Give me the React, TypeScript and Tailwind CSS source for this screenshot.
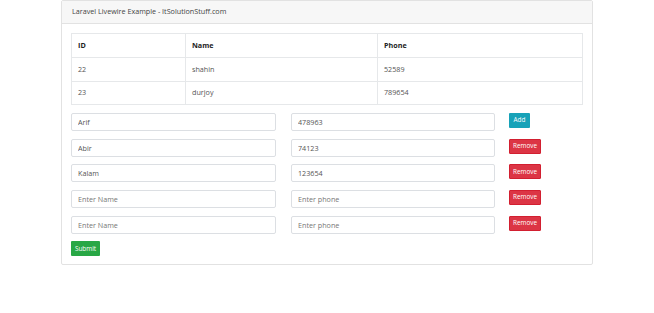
import React, { useState } from "react";

type Person = { id: number; name: string; phone: string };
type Entry = { name: string; phone: string };

const people: Person[] = [
  { id: 22, name: "shahin", phone: "52589" },
  { id: 23, name: "durjoy", phone: "789654" },
];

const initialEntries: Entry[] = [
  { name: "Arif", phone: "478963" },
  { name: "Abir", phone: "74123" },
  { name: "Kalam", phone: "123654" },
  { name: "", phone: "" },
  { name: "", phone: "" },
];

const inputClass =
  "block w-full h-[18px] px-[6px] text-[7.2px] text-[#555] placeholder:text-[#777] bg-white border border-[#dcdfe3] rounded-[2px] outline-none";

const App: React.FC = () => {
  const [entries, setEntries] = useState<Entry[]>(initialEntries);

  const updateEntry = (index: number, field: keyof Entry, value: string) => {
    setEntries((prev) =>
      prev.map((e, i) => (i === index ? { ...e, [field]: value } : e))
    );
  };

  return (
    <div
      className="min-h-screen bg-white leading-none"
      style={{ fontFamily: '"Open Sans", "Noto Sans", sans-serif' }}
    >
      <div className="w-[532px] mx-auto border border-[#e2e2e2] rounded-[2px]">
        {/* Card header */}
        <div className="h-[23px] flex items-center px-[10px] bg-[#f7f7f7] border-b border-[#e2e2e2] text-[7.2px] text-[#444]">
          Laravel Livewire Example - ItSolutionStuff.com
        </div>

        <div className="px-[9px] pt-[9px] pb-[8px]">
          {/* Table */}
          <table className="w-[512px] border-collapse text-[7.2px] text-[#555] mb-[8px]">
            <thead>
              <tr className="h-[24px]">
                <th className="w-[114px] border border-[#e6e8ea] text-left font-bold text-[#222] px-[6px]">ID</th>
                <th className="w-[192px] border border-[#e6e8ea] text-left font-bold text-[#222] px-[6px]">Name</th>
                <th className="border border-[#e6e8ea] text-left font-bold text-[#222] px-[6px]">Phone</th>
              </tr>
            </thead>
            <tbody>
              {people.map((p) => (
                <tr key={p.id} className="h-[23.5px]">
                  <td className="border border-[#e6e8ea] px-[6px]">{p.id}</td>
                  <td className="border border-[#e6e8ea] px-[6px]">{p.name}</td>
                  <td className="border border-[#e6e8ea] px-[6px]">{p.phone}</td>
                </tr>
              ))}
            </tbody>
          </table>

          {/* Dynamic rows */}
          <div className="flex flex-col gap-[7.7px]">
            {entries.map((entry, i) => (
              <div key={i} className="flex items-start">
                <div className="w-[205px]">
                  <input
                    type="text"
                    value={entry.name}
                    placeholder="Enter Name"
                    onChange={(e) => updateEntry(i, "name", e.target.value)}
                    className={inputClass}
                  />
                </div>
                <div className="w-[204px] ml-[15px]">
                  <input
                    type="text"
                    value={entry.phone}
                    placeholder="Enter phone"
                    onChange={(e) => updateEntry(i, "phone", e.target.value)}
                    className={inputClass}
                  />
                </div>
                <div className="ml-[14px]">
                  {i === 0 ? (
                    <button
                      type="button"
                      onClick={() => setEntries((prev) => [...prev, { name: "", phone: "" }])}
                      className="h-[15px] w-[21px] bg-[#17a2b8] text-white text-[6.4px] rounded-[1px] flex items-center justify-center"
                    >
                      Add
                    </button>
                  ) : (
                    <button
                      type="button"
                      onClick={() => setEntries((prev) => prev.filter((_, j) => j !== i))}
                      className="h-[15px] w-[32px] bg-[#dc3545] border border-[#d21f30] text-white text-[6.4px] rounded-[1px] flex items-center justify-center"
                    >
                      Remove
                    </button>
                  )}
                </div>
              </div>
            ))}
          </div>

          <button
            type="submit"
            className="mt-[7.5px] h-[15px] w-[29px] bg-[#28a745] text-white text-[6.4px] rounded-[1px] flex items-center justify-center"
          >
            Submit
          </button>
        </div>
      </div>
    </div>
  );
};

export default App;
